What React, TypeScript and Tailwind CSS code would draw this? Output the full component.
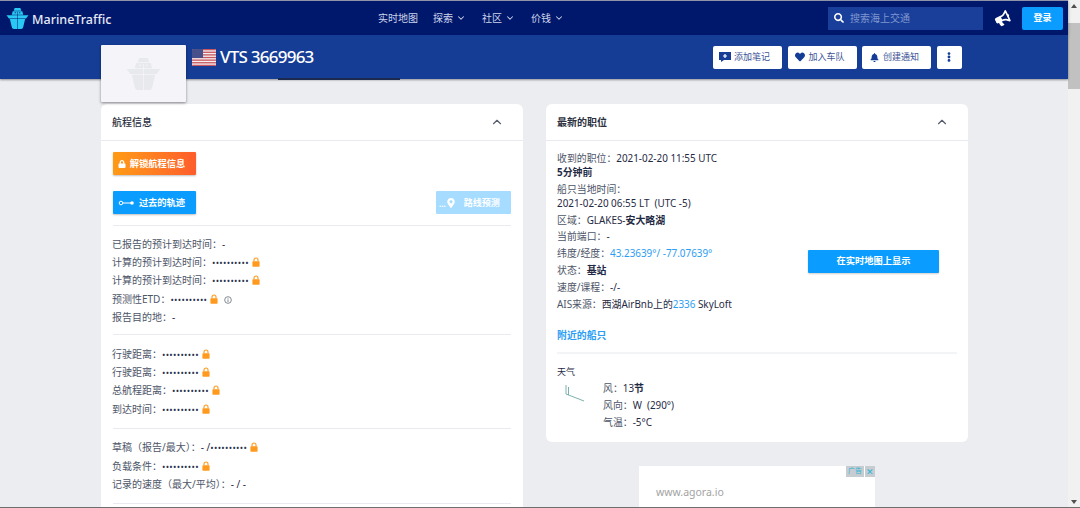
import { ChevronDown, ChevronUp } from "lucide-react";
import { FaBell, FaBullhorn, FaEllipsisV, FaHeart, FaLock, FaMapMarkerAlt, FaSearch } from "react-icons/fa";
import type { ReactNode } from "react";

function Ship({ className, color, detail }: { className: string; color: string; detail: string }) {
  return (
    <svg viewBox="0 0 24 22" className={className}>
      <path d="M9 0h6l1 3h-8z" fill={color} />
      <path d="M7 3.500h10l1 3.500H6z" fill={color} />
      <path d="M0.500 7.500h23l-2.500 3.500H3z" fill={color} />
      <path d="M4 11.500h16l-2 8.500c-.3 1.300-1 2-2.200 2H8.200C7 22 6.300 21.300 6 20z" fill={color} />
      <path d="M12 4v18" stroke={detail} strokeWidth="0.500" />
      <path d="M9 5h1.500M13.500 5H15" stroke={detail} strokeWidth="0.800" />
    </svg>
  );
}

function Flag() {
  const stripes = [0, 2, 4, 6, 8, 10, 12];
  return (
    <svg viewBox="0 0 24 17" className="h-[17px] w-[24px] rounded-[1px]">
      <rect width="24" height="17" fill="#f4f0f0" />
      {stripes.map((y) => (
        <rect key={y} y={y * 1.31} width="24" height="1.31" fill="#c8555f" />
      ))}
      <rect width="11" height="9" fill="#47508a" />
    </svg>
  );
}

function Lock() {
  return (
    <svg viewBox="0 0 10 12" className="ml-[3px] inline-block h-[10px] w-[8px] align-[-1px]">
      <path d="M2.500 5.500V3.500a2.500 2.500 0 0 1 5 0v2" fill="none" stroke="#ff9a1f" strokeWidth="1.400" />
      <rect x="0.500" y="5" width="9" height="7" rx="1" fill="#ff9a1f" />
    </svg>
  );
}

function Dots() {
  return <span className="text-[9px] tracking-[0.3px] text-[#2a3350]">••••••••••</span>;
}

function Row({ label, children }: { label: string; children?: ReactNode }) {
  return (
    <div className="-ml-[1px] flex h-[18.400px] items-center whitespace-pre text-[10px] text-[#4d5568]">
      <span>{label}</span>
      <span className="text-[#1f2a44]">{children}</span>
    </div>
  );
}

function NavItem({ label, menu }: { label: string; menu?: boolean }) {
  return (
    <span className="flex items-center gap-[3px] text-[10px] text-[#cdd4ea]">
      {label}
      {menu && <ChevronDown size={10} strokeWidth={2.500} />}
    </span>
  );
}

function HeaderButton({ icon, label }: { icon: ReactNode; label: string }) {
  return (
    <button className="flex h-[23px] w-[69px] items-center gap-[4px] rounded-[2px] bg-white pl-[7px] text-[9px] text-[#3c5396]">
      <span className="flex w-[10px] justify-center text-[#163d96]">{icon}</span>
      {label}
    </button>
  );
}

function CardHeader({ title, strong }: { title: string; strong?: boolean }) {
  return (
    <div className="flex h-[37px] items-center justify-between border-b border-[#e8eaef] pr-[19px] pl-[11px]">
      <span className={`text-[10px] text-[#2b3040] ${strong ? "font-bold" : "font-medium"}`}>{title}</span>
      <ChevronUp size={14} strokeWidth={2} className="text-[#555c6e]" />
    </div>
  );
}

export default function App() {
  return (
    <div className="relative flex h-[508px] w-[1080px] overflow-hidden bg-[#ecedf1] font-['Noto_Sans','Noto_Sans_CJK_SC',sans-serif]">
      <div className="flex min-w-0 flex-1 flex-col">
        {/* Top nav */}
        <header className="relative flex h-[35px] shrink-0 items-center border-t border-[#8f93a8] bg-[#00186c] shadow-[0_1px_3px_rgba(0,0,0,0.4)]">
          <div className="flex w-[378px] items-center pl-[6px]">
            <Ship className="h-[21px] w-[23px]" color="#2ac8f5" detail="#00186c" />
            <span className="ml-[3px] pt-[4px] text-[12.500px] font-medium text-[#e6eaf5]">MarineTraffic</span>
          </div>
          <nav className="flex w-[450px] items-center gap-[16px]">
            <span className="-mr-[1px]">
              <NavItem label="实时地图" />
            </span>
            <NavItem label="探索" menu />
            <NavItem label="社区" menu />
            <NavItem label="价钱" menu />
          </nav>
          <div className="flex h-[23px] w-[155px] items-center gap-[6px] bg-[#1a3f9a] pl-[6px] text-[10px] text-[#7f96cf]">
            <FaSearch size={10} className="text-white" />
            搜索海上交通
          </div>
          <FaBullhorn size={15} className="ml-[12px] -rotate-[25deg] text-white" />
          <button className="ml-[12px] h-[23px] w-[41px] rounded-[2px] bg-[#0a9dff] text-[9px] font-bold text-white">登录</button>
        </header>

        {/* Ship title bar */}
        <div className="relative flex h-[44px] shrink-0 items-center bg-[#163d96] pr-[106px] pl-[192px] shadow-[0_1px_2px_rgba(0,0,0,0.4)]">
          <Flag />
          <h1 className="ml-[4px] flex-1 text-[17px] font-medium tracking-[-0.75px] text-white">VTS 3669963</h1>
          <div className="flex gap-[5.500px]">
            <HeaderButton
              label="添加笔记"
              icon={
                <svg viewBox="0 0 12 10" className="h-[10px] w-[12px] shrink-0">
                  <path d="M0 0h12v8H5L2 10V8H0z" fill="currentColor" />
                  <path d="M6 2v4M4 4h4" stroke="#ffffff" strokeWidth="1.200" />
                </svg>
              }
            />
            <HeaderButton label="加入车队" icon={<FaHeart size={10} />} />
            <HeaderButton label="创建通知" icon={<FaBell size={9} />} />
            <button className="flex h-[23px] w-[25.500px] items-center justify-center rounded-[2px] bg-white text-[#163d96]">
              <FaEllipsisV size={10} />
            </button>
          </div>
          <span className="absolute bottom-[-1px] left-[278px] h-[2px] w-[122px] bg-[#1c2a50]" />
        </div>

        {/* Ship thumbnail */}
        <div className="absolute top-[45px] left-[101px] z-10 flex h-[57px] w-[85px] items-center justify-center rounded-[1px] bg-[#f5f5f9] shadow-[0_1px_3px_rgba(0,0,0,0.45)]">
          <Ship className="h-[34px] w-[35px]" color="#e7e9ed" detail="#f5f5f9" />
        </div>

        {/* Cards */}
        <main className="grid grid-cols-[422px_422px] gap-[23px] pt-[25px] pl-[101px]">
          <section className="h-[500px] rounded-t-[6px] bg-white">
            <CardHeader title="航程信息" />
            <div className="px-[12px]">
              <div className="pt-[11px]">
                <button className="flex h-[23px] w-[83px] items-center justify-center gap-[4px] rounded-[1px] bg-gradient-to-r from-[#ff9a12] to-[#ff5c2b] pr-[6px] text-[9.250px] font-bold text-white shadow-[0_1px_2px_rgba(0,0,0,0.25)]">
                  <FaLock size={8} />
                  解锁航程信息
                </button>
              </div>
              <div className="flex justify-between pt-[16px] pb-[11px]">
                <button className="flex h-[23px] w-[83px] items-center justify-center gap-[5px] rounded-[1px] bg-[#0a9dff] pr-[6px] text-[9.250px] font-bold text-white shadow-[0_1px_2px_rgba(0,0,0,0.25)]">
                  <svg viewBox="0 0 16 6" className="h-[6px] w-[16px]">
                    <circle cx="3" cy="3" r="1.800" fill="none" stroke="#ffffff" />
                    <path d="M5 3h8" stroke="#ffffff" />
                    <circle cx="14" cy="3" r="1.800" fill="#ffffff" />
                  </svg>
                  过去的轨迹
                </button>
                <button className="flex h-[23px] w-[75px] items-center justify-center gap-[8px] rounded-[1px] bg-[#a6dcff] pr-[8px] text-[9px] font-bold text-white">
                  <span className="flex items-end">
                    <span className="text-[8px] leading-[8px]">...</span>
                    <FaMapMarkerAlt size={10} />
                  </span>
                  路线预测
                </button>
              </div>
              <div className="border-t border-[#e8eaef] pt-[9px] pb-[7px]">
                <Row label="已报告的预计到达时间：">-</Row>
                <Row label="计算的预计到达时间："><Dots /><Lock /></Row>
                <Row label="计算的预计到达时间："><Dots /><Lock /></Row>
                <Row label="预测性ETD：">
                  <Dots />
                  <Lock />
                  <svg viewBox="0 0 12 12" className="ml-[6px] inline-block h-[8px] w-[8px] align-[-1px]">
                    <circle cx="6" cy="6" r="5" fill="none" stroke="#666d7d" strokeWidth="1.200" />
                    <path d="M6 5v4M6 3v1" stroke="#666d7d" strokeWidth="1.200" />
                  </svg>
                </Row>
                <Row label="报告目的地：">-</Row>
              </div>
              <div className="border-t border-[#e8eaef] pt-[10px] pb-[9px]">
                <Row label="行驶距离："><Dots /><Lock /></Row>
                <Row label="行驶距离："><Dots /><Lock /></Row>
                <Row label="总航程距离："><Dots /><Lock /></Row>
                <Row label="到达时间："><Dots /><Lock /></Row>
              </div>
              <div className="border-t border-[#e8eaef] pt-[10px] pb-[9px]">
                <Row label="草稿（报告/最大）：">- /<Dots /><Lock /></Row>
                <Row label="负载条件："><Dots /><Lock /></Row>
                <Row label="记录的速度（最大/平均）：">- / -</Row>
              </div>
              <div className="border-t border-[#e8eaef]" />
            </div>
          </section>

          <div className="flex flex-col">
            <section className="h-[338px] rounded-[6px] bg-white">
              <CardHeader title="最新的职位" strong />
              <div className="px-[11px] pt-[10px] text-[9.900px] leading-[14px] text-[#1f2a44]">
                <div className="flex items-center">
                  <div className="w-[251px]">
                    <p><span className="text-[#4d5568]">收到的职位：</span>2021-02-20 11:55 UTC</p>
                    <p className="font-bold">5分钟前</p>
                    <p className="mt-[3px] text-[#4d5568]">船只当地时间：</p>
                    <p className="whitespace-pre">2021-02-20 06:55 LT  (UTC -5)</p>
                    <p className="mt-[3px]"><span className="text-[#4d5568]">区域：</span>GLAKES-<b>安大略湖</b></p>
                    <p className="mt-[2px]"><span className="text-[#4d5568]">当前端口：</span>-</p>
                    <p className="mt-[3px]"><span className="text-[#4d5568]">纬度/经度：</span><span className="text-[#2a9df4]">43.23639°/ -77.07639°</span></p>
                    <p className="mt-[3px]"><span className="text-[#4d5568]">状态：</span><b>基站</b></p>
                    <p className="mt-[3px]"><span className="text-[#4d5568]">速度/课程：</span>-/-</p>
                    <p className="mt-[3px]"><span className="text-[#4d5568]">AIS来源：</span>西湖AirBnb上的<span className="text-[#2a9df4]">2336</span> SkyLoft</p>
                  </div>
                  <button className="mt-[60px] h-[23px] w-[131px] rounded-[1px] bg-[#0a9dff] text-[9.250px] font-bold text-white shadow-[0_1px_2px_rgba(0,0,0,0.2)]">在实时地图上显示</button>
                </div>
                <p className="mt-[17px] font-bold text-[#2a9df4]">附近的船只</p>
                <div className="mt-[10px] border-t-2 border-[#f3f4f6]" />
                <p className="mt-[11px] text-[9px]">天气</p>
                <div className="mt-[1px] flex">
                  <svg viewBox="0 0 24 20" className="mt-[4px] ml-[8px] h-[20px] w-[24px]">
                    <path d="M1 1v9l18 7M3.500 3v8" fill="none" stroke="#6da9a4" strokeWidth="0.900" />
                  </svg>
                  <div className="ml-[14px] leading-[17px]">
                    <p><span className="text-[#4d5568]">风：</span>13<b>节</b></p>
                    <p className="whitespace-pre"><span className="text-[#4d5568]">风向：</span>W  (290°)</p>
                    <p><span className="text-[#4d5568]">气温：</span>-5°C</p>
                  </div>
                </div>
              </div>
            </section>

            {/* Ad */}
            <div className="relative mt-[24px] ml-[93px] h-[100px] w-[236px] bg-white pt-[19px] pl-[17px] text-[10.500px] text-[#a3a3a3]">
              www.agora.io
              <div className="absolute top-0 right-0 flex gap-[1px]">
                <span className="flex h-[11px] w-[18px] items-center justify-center bg-[#c6ccd0] text-[7px] text-[#28b6d8]">广告</span>
                <span className="flex h-[11px] w-[10px] items-center justify-center bg-[#c6ccd0] text-[9px] leading-none text-[#28b6d8]">✕</span>
              </div>
            </div>
          </div>
        </main>
      </div>

      {/* Scrollbar */}
      <aside className="flex w-[12px] shrink-0 flex-col items-center bg-[#f1f1f1]">
        <span className="mt-[4px] h-0 w-0 border-x-[3px] border-b-[4px] border-x-transparent border-b-[#505050]" />
        <span className="mt-[15px] h-[66px] w-full bg-[#c1c1c1]" />
        <span className="mt-auto mb-[4px] h-0 w-0 border-x-[3px] border-t-[4px] border-x-transparent border-t-[#505050]" />
      </aside>
      <div className="absolute right-0 bottom-0 left-0 h-px bg-[#6e6e6e]" />
    </div>
  );
}
